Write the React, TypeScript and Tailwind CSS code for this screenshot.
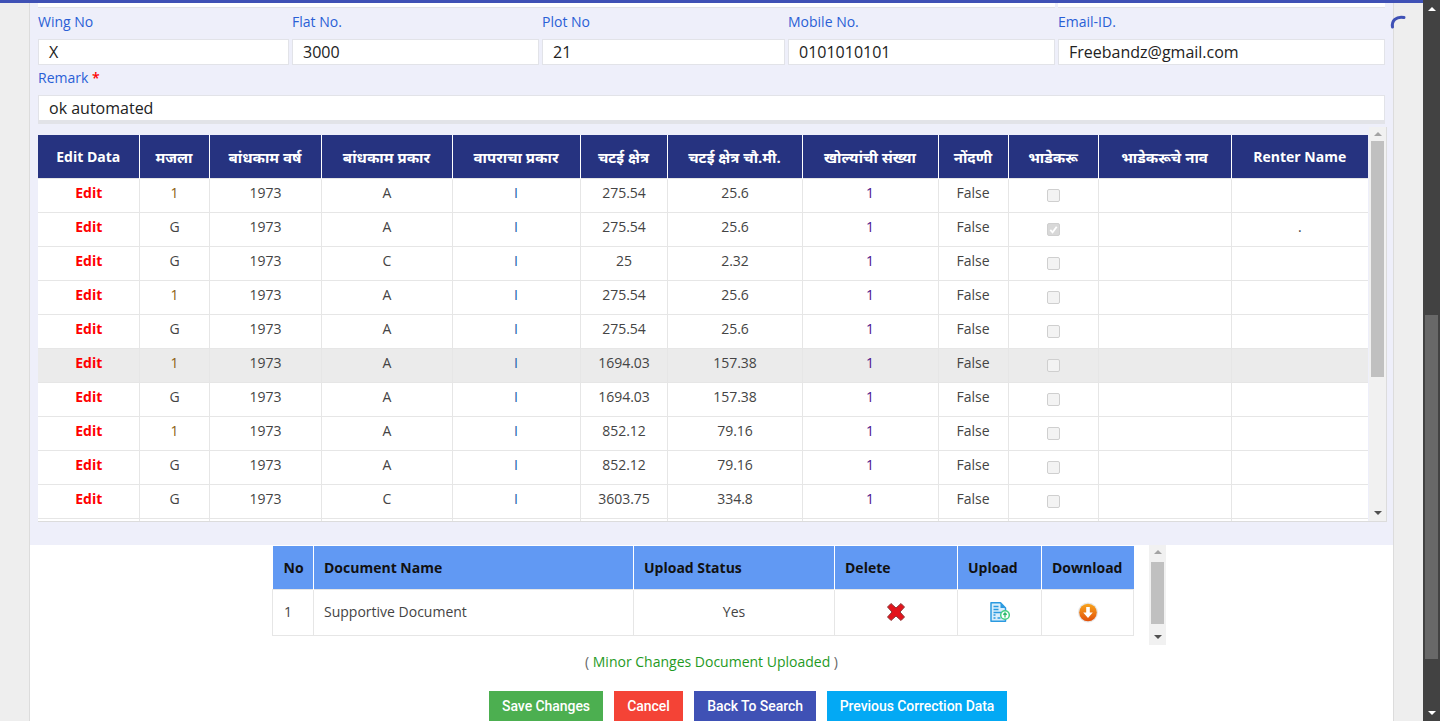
const stack = { fontFamily: '"Open Sans","Noto Sans",sans-serif' };

const cols = [101, 70, 112, 131, 128, 87, 135, 136, 70, 90, 133, 137];
const heads = ['Edit Data', 'मजला', 'बांधकाम वर्ष', 'बांधकाम प्रकार', 'वापराचा प्रकार', 'चटई क्षेत्र', 'चटई क्षेत्र चौ.मी.', 'खोल्यांची संख्या', 'नोंदणी', 'भाडेकरू', 'भाडेकरूचे नाव', 'Renter Name'];
const rows: [string, string, string, string, string, boolean?, string?][] = [
  ['1', '1973', 'A', '275.54', '25.6'],
  ['G', '1973', 'A', '275.54', '25.6', true, '.'],
  ['G', '1973', 'C', '25', '2.32'],
  ['1', '1973', 'A', '275.54', '25.6'],
  ['G', '1973', 'A', '275.54', '25.6'],
  ['1', '1973', 'A', '1694.03', '157.38'],
  ['G', '1973', 'A', '1694.03', '157.38'],
  ['1', '1973', 'A', '852.12', '79.16'],
  ['G', '1973', 'A', '852.12', '79.16'],
  ['G', '1973', 'C', '3603.75', '334.8'],
];

function Field({ label, value, className, req }: { label: string; value: string; className: string; req?: boolean }) {
  return (
    <div className={`flex flex-col ${className}`}>
      <div className="h-[29px] pt-[2px] text-[14px] leading-[19px] text-[#2a5fd6]">
        {label}
        {req && <span className="text-[#f00] font-semibold"> *</span>}
      </div>
      <div className="h-[26px] bg-white border border-[#e2e3e8] pl-[10px] text-[16px] leading-[25px] text-[#222]">{value}</div>
    </div>
  );
}

function Check({ on }: { on?: boolean }) {
  return (
    <span className={`inline-flex w-[13px] h-[13px] mt-[4px] rounded-[2px] border border-[#cfcfcf] items-center justify-center align-middle ${on ? 'bg-[#d8d8d8]' : 'bg-[#f3f3f3]'}`}>
      {on && (
        <svg viewBox="0 0 12 12" className="w-[11px] h-[11px]">
          <path d="M2.5 6.3 5 9 9.5 3" fill="none" stroke="#fff" strokeWidth="2" />
        </svg>
      )}
    </span>
  );
}

function Bar({ className, thumb }: { className: string; thumb: string }) {
  return (
    <div className={`flex flex-col items-center bg-[#f1f1f1] ${className}`}>
      <div className="h-[14px] flex items-center justify-center shrink-0">
        <span className="w-0 h-0 border-x-[4px] border-x-transparent border-b-[4px] border-b-[#a3a3a3]" />
      </div>
      <div className={`w-[13px] bg-[#c0c0c0] shrink-0 ${thumb}`} />
      <div className="flex-1" />
      <div className="h-[17px] flex items-center justify-center shrink-0">
        <span className="w-0 h-0 border-x-[4px] border-x-transparent border-t-[4px] border-t-[#505050]" />
      </div>
    </div>
  );
}

const td = 'border border-[#e6e6e6] p-0 pb-[6px]';
const tdS = 'border border-[#e6e6e6] p-0 pb-[6px] pl-[1px]';

export default function App() {
  return (
    <div className="h-[721px] w-[1440px] overflow-hidden flex bg-[#eeeeee]" style={stack}>
      <div className="w-[1423px] flex flex-col">
        <div className="h-[3px] bg-[#3f51b5] shrink-0" />
        <div className="flex flex-1 min-h-0">
          <div className="w-[29px] shrink-0" />
          <div className="w-[1365px] shrink-0 flex flex-col bg-white border-x border-[#dcdcdc]">
            <div className="h-[542px] shrink-0 bg-[#eeeffa] pl-[8px] pr-[8px] flex flex-col">
              <div className="h-[5px] w-[1347px] flex gap-[3px] shrink-0">
                <div className="flex-1 bg-white border-b border-[#e2e3e8]" />
                <div className="w-[327px] bg-white border-b border-[#e2e3e8]" />
              </div>
              <div className="h-[2px] shrink-0" />
              <div className="flex gap-[3px] w-[1347px] shrink-0">
                <Field label="Wing No" value="X" className="w-[251px]" />
                <Field label="Flat No." value="3000" className="w-[247px]" />
                <Field label="Plot No" value="21" className="w-[243px]" />
                <Field label="Mobile No." value="0101010101" className="w-[267px]" />
                <Field label="Email-ID." value="Freebandz@gmail.com" className="w-[327px]" />
              </div>
              <Field label="Remark" req value="ok automated" className="w-[1347px] shrink-0 mt-[1px]" />
              <div className="h-[3px] shrink-0 bg-[#e2e3e8]" />
              <div className="h-[3px] shrink-0" />
              <div className="flex w-[1349px] h-[395px] shrink-0 border-b border-r border-[#dcdcdc]">
                <div className="flex-1 overflow-hidden flex flex-col">
                  <div className="h-[8px] shrink-0" />
                  <table className="table-fixed border-collapse w-[1330px] bg-white">
                    <colgroup>
                      {cols.map((w, i) => (
                        <col key={i} style={{ width: w }} />
                      ))}
                    </colgroup>
                    <thead>
                      <tr className="h-[43px] bg-[#263380]">
                        {heads.map((h, i) => (
                          <th key={i} className={`border-r border-white text-white font-bold leading-[20px] text-center p-0 pt-[2px] last:border-r-0 ${i === 0 || i === 11 ? 'text-[14px]' : 'text-[15px]'}`}>
                            {h}
                          </th>
                        ))}
                      </tr>
                    </thead>
                    <tbody>
                      {rows.map((r, i) => (
                        <tr key={i} className={`h-[34px] text-[14px] text-[#444] text-center ${i === 5 ? 'bg-[#ebebeb]' : 'bg-white'}`}>
                          <td className={`${tdS} border-l-0 font-bold text-[#f00]`}>Edit</td>
                          <td className={`${tdS} ${r[0] === '1' ? 'text-[#8b5e14]' : ''}`}>{r[0]}</td>
                          <td className={tdS}>{r[1]}</td>
                          <td className={tdS}>{r[2]}</td>
                          <td className={`${td} text-[#1a5ca8]`}>I</td>
                          <td className={tdS}>{r[3]}</td>
                          <td className={tdS}>{r[4]}</td>
                          <td className={`${td} text-[#4b0f8c]`}>1</td>
                          <td className={td}>False</td>
                          <td className={td}>
                            <Check on={r[5]} />
                          </td>
                          <td className={td} />
                          <td className={`${td} border-r-0`}>{r[6]}</td>
                        </tr>
                      ))}
                      <tr className="h-[34px] bg-white">
                        {cols.map((_, i) => (
                          <td key={i} className="border-x border-[#e6e6e6] first:border-l-0 last:border-r-0 p-0" />
                        ))}
                      </tr>
                    </tbody>
                  </table>
                </div>
                <Bar className="w-[17px]" thumb="h-[236px]" />
              </div>
              <div className="flex-1" />
            </div>
            <div className="flex justify-start pl-[242px] shrink-0">
              <table className="table-fixed border-collapse w-[861px] self-start mt-[1px]">
                <colgroup>
                  {[41, 320, 201, 123, 84, 92].map((w, i) => (
                    <col key={i} style={{ width: w }} />
                  ))}
                </colgroup>
                <thead>
                  <tr className="h-[43px] bg-[#6199f3] text-[14px] font-bold text-[#111] text-left">
                    <th className="pl-[11px] border-r border-white">No</th>
                    <th className="pl-[10px] border-r border-white">Document Name</th>
                    <th className="pl-[10px] border-r border-white">Upload Status</th>
                    <th className="pl-[10px] border-r border-white">Delete</th>
                    <th className="pl-[10px] border-r border-white">Upload</th>
                    <th className="pl-[10px]">Download</th>
                  </tr>
                </thead>
                <tbody>
                  <tr className="h-[46px] text-[14px] text-[#444]">
                    <td className="border border-[#e6e6e6] pl-[11px] pb-[2px]">1</td>
                    <td className="border border-[#e6e6e6] pl-[10px] pb-[2px]">Supportive Document</td>
                    <td className="border border-[#e6e6e6] text-center pb-[2px]">Yes</td>
                    <td className="border border-[#e6e6e6]">
                      <svg viewBox="0 0 20 20" className="w-[20px] h-[20px] mx-auto">
                        <path d="M1.500 5 5 1.500 10 6 15 1.500 18.500 5 14 10 18.500 15 15 18.500 10 14 5 18.500 1.500 15 6 10Z" fill="#e3141c" stroke="#8a3a3a" strokeWidth="1" strokeLinejoin="round" />
                      </svg>
                    </td>
                    <td className="border border-[#e6e6e6]">
                      <svg viewBox="0 0 20 20" className="w-[20px] h-[20px] mx-auto">
                        <path d="M1 .8h9.500L15.500 6v13.200H1Z" fill="#d9eefb" stroke="#2b9ae0" strokeWidth="1.500" strokeLinejoin="round" />
                        <path d="M10.500 1v5h5Z" fill="#2b9ae0" />
                        <path d="M3.500 4.500h5M3.500 7.500h5M3.500 10.500h8M3.500 13h2M3.500 16h2M7.500 16h3" stroke="#2b9ae0" strokeWidth="1.500" />
                        <circle cx="15" cy="13" r="4.300" fill="#fff" stroke="#45cf80" strokeWidth="1.500" />
                        <path d="M15 15.500v-4.500M13.300 12.800 15 11l1.700 1.800" fill="none" stroke="#2fb86c" strokeWidth="1.300" />
                      </svg>
                    </td>
                    <td className="border border-[#e6e6e6]">
                      <svg viewBox="0 0 20 21" className="w-[20px] h-[21px] mx-auto">
                        <defs>
                          <linearGradient id="dl" x1="0" y1="0" x2="0" y2="1">
                            <stop offset="0" stopColor="#f8a51d" />
                            <stop offset="1" stopColor="#e2500a" />
                          </linearGradient>
                        </defs>
                        <circle cx="10" cy="10.500" r="10" fill="#e6e6e6" />
                        <circle cx="10" cy="10.500" r="8.800" fill="url(#dl)" />
                        <path d="M8.200 5h3.600v5.500h3L10 16l-4.800-5.500h3Z" fill="#fff" />
                      </svg>
                    </td>
                  </tr>
                </tbody>
              </table>
              <Bar className="w-[17px] h-[100px] ml-[15px]" thumb="h-[62px] mt-[3px]" />
            </div>
            <div className="mt-[7px] text-center text-[14px] leading-[20px] text-[#666]">
              ( <span className="text-[#1f9a1f]">Minor Changes Document Uploaded</span> )
            </div>
            <div className="mt-[19px] flex justify-start gap-[11px] pl-[459px] text-white text-[14px] font-medium leading-[30px] text-center tracking-[-0.06px]" style={{ fontFamily: 'Roboto,sans-serif' }}>
              <div className="h-[30px] w-[114px] bg-[#4caf50]">Save Changes</div>
              <div className="h-[30px] w-[69px] bg-[#f44336]">Cancel</div>
              <div className="h-[30px] w-[122px] bg-[#3f51b5]">Back To Search</div>
              <div className="h-[30px] w-[180px] bg-[#03a9f4]">Previous Correction Data</div>
            </div>
          </div>
          <div className="flex-1 relative">
            <svg viewBox="0 0 18 18" className="absolute left-[-4px] top-[11px] w-[18px] h-[18px]">
              <path d="M2.500 13C1.500 7 6 2 14 3.500" fill="none" stroke="#3f51b5" strokeWidth="3" strokeLinecap="round" />
            </svg>
          </div>
        </div>
      </div>
      <div className="w-[17px] bg-[#424242] flex flex-col items-center">
        <div className="h-[17px] flex items-center justify-center shrink-0">
          <span className="w-0 h-0 border-x-[4px] border-x-transparent border-b-[4px] border-b-white" />
        </div>
        <div className="h-[298px] shrink-0" />
        <div className="w-[13px] h-[344px] bg-[#686868] shrink-0" />
        <div className="flex-1" />
        <div className="h-[17px] flex items-center justify-center shrink-0">
          <span className="w-0 h-0 border-x-[4px] border-x-transparent border-t-[4px] border-t-white" />
        </div>
      </div>
    </div>
  );
}
